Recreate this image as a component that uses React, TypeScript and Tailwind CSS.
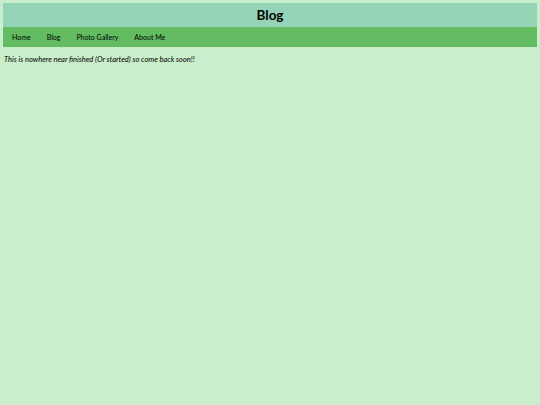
export default function App() {
  const links = ['Home', 'Blog', 'Photo Gallery', 'About Me'];

  return (
    <div
      className="min-h-[405px] w-full bg-[#c9eecb] pt-[3px] text-black"
      style={{ fontFamily: 'Lato, "Open Sans", sans-serif' }}
    >
      <header className="ml-[3px] mr-[3px] flex h-[24px] items-center justify-center bg-[#94d3b6] pt-[1px]">
        <h1 className="text-[13.5px] font-bold leading-none">Blog</h1>
      </header>
      <nav className="ml-[3px] mr-[3px] flex h-[20px] items-center gap-[16px] bg-[#64bc62] pl-[9px] text-[7px]">
        {links.map((l) => (
          <a key={l} href="#" className="block">
            {l}
          </a>
        ))}
      </nav>
      <p className="mt-[7px] pl-[4px] text-[7.5px] italic">
        This is nowhere near finished (Or started) so come back soon!!
      </p>
    </div>
  );
}
